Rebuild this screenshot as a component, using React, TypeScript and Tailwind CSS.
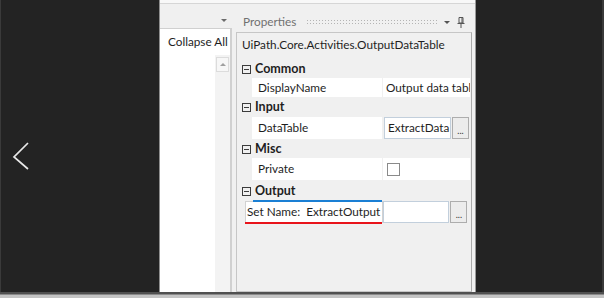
function Minus() {
  return (
    <span className="w-[9px] h-[9px] border border-[#3c3c3c] flex items-center justify-center shrink-0">
      <span className="w-[5px] h-px bg-[#3c3c3c]" />
    </span>
  );
}

function Category({ label, h }: { label: string; h: string }) {
  return (
    <div className={`flex items-center gap-[4px] pl-[5px] pt-px ${h}`}>
      <Minus />
      <span className="font-bold text-[12.5px] text-[#1e1e1e]">{label}</span>
    </div>
  );
}

function DotsButton() {
  return (
    <div className="w-[17px] h-full border border-[#adadad] bg-[#ececec] flex items-end justify-center pb-[3px] text-[9px] leading-none text-[#333]">
      ...
    </div>
  );
}

export default function App() {
  return (
    <div className="w-[604px] h-[298px] flex flex-col bg-[#232323] font-['Lato',sans-serif] text-[11.75px] text-[#1e1e1e]">
      <div className="flex h-[292px]">
        {/* left dark area */}
        <div className="w-[160px] border-l border-l-[#3a3a3a] border-r border-r-[#8e8e8e]">
          <svg width="18" height="32" viewBox="0 0 18 32" className="ml-[11px] mt-[141px]">
            <path d="M16 2 L2 16 L16 28" stroke="#e8e8e8" strokeWidth="1.7" fill="none" />
          </svg>
        </div>

        {/* screenshot */}
        <div className="w-[315px] flex flex-col bg-[#f0f0f0] border-t-[3px] border-t-[#f8f8f8]">
          <div className="h-px bg-[#d6d6d6]" />
          <div className="flex flex-1">
            {/* left panel */}
            <div className="w-[72px] flex flex-col">
              <div className="h-[24px] flex items-end justify-end pr-[5px] pb-[6px]">
                <span className="w-0 h-0 border-l-[3px] border-r-[3px] border-t-[3px] border-l-transparent border-r-transparent border-t-[#6b6b6b]" />
              </div>
              <div className="flex-1 flex flex-col bg-white border-t border-r-2 border-[#d0d0d0]">
                <div className="h-[26px] flex items-center pl-[8px] whitespace-nowrap">Collapse All</div>
                <div className="flex flex-1">
                  <div className="flex-1" />
                  <div className="w-[15px] bg-[#f3f3f3] pt-[2px]">
                    <div className="h-[15px] mx-[1px] border border-[#dcdcdc] bg-[#f7f7f7] flex items-center justify-center">
                      <span className="w-0 h-0 border-l-[3px] border-r-[3px] border-b-[3px] border-l-transparent border-r-transparent border-b-[#a0a0a0]" />
                    </div>
                  </div>
                </div>
              </div>
            </div>
            <div className="w-[4px]" />

            {/* properties panel */}
            <div className="w-[236px] flex flex-col">
              <div className="h-[28px] flex items-center pt-[8px] pl-[7px] pr-[7px]">
                <span className="text-[#707070]">Properties</span>
                <div className="flex-1 h-[6px] ml-[10px] mr-[5px] bg-[radial-gradient(circle,#b4b4b4_0.8px,transparent_1px)] bg-[length:3px_3px]" />
                <span className="w-0 h-0 border-l-[3px] border-r-[3px] border-t-[3px] border-l-transparent border-r-transparent border-t-[#555]" />
                <svg width="8" height="11" viewBox="0 0 8 11" className="ml-[7px]">
                  <path d="M2 0.5 H6 V6 H2 Z" fill="none" stroke="#555" strokeWidth="1" />
                  <path d="M5 1 V6" stroke="#555" strokeWidth="1" />
                  <path d="M0.5 6.5 H7.5" stroke="#555" strokeWidth="1" />
                  <path d="M4 7 V11" stroke="#555" strokeWidth="1" />
                </svg>
              </div>
              <div className="flex-1 border border-[#c6c6c6] border-r-[#a9a9a9] flex flex-col">
                <div className="h-[26px] pb-[3px] flex items-center pl-[5px] whitespace-nowrap">
                  UiPath.Core.Activities.OutputDataTable
                </div>

                <Category label="Common" h="h-[19px]" />
                <div className="flex h-[19px] pl-[15px] pr-px">
                  <div className="w-[130px] bg-white pl-[6px] flex items-center">DisplayName</div>
                  <div className="w-[87px] ml-px bg-white pl-[3px] flex items-center overflow-hidden whitespace-nowrap">
                    Output data table
                  </div>
                </div>

                <Category label="Input" h="h-[20px]" />
                <div className="flex h-[22px] pl-[15px] pr-px">
                  <div className="w-[130px] bg-white pl-[6px] flex items-center">DataTable</div>
                  <div className="w-[87px] ml-px flex gap-px pl-px pr-px">
                    <div className="w-[67px] border border-[#c2cfdc] bg-white pl-[3px] flex items-center overflow-hidden whitespace-nowrap">
                      ExtractData`
                    </div>
                    <DotsButton />
                  </div>
                </div>

                <Category label="Misc" h="h-[19px]" />
                <div className="flex h-[22px] pl-[15px] pr-px">
                  <div className="w-[130px] bg-white pl-[6px] flex items-center">Private</div>
                  <div className="w-[87px] ml-px bg-white pl-[4px] flex items-center">
                    <span className="w-[13px] h-[13px] border border-[#8a8a8a] bg-white mt-[1px]" />
                  </div>
                </div>

                <Category label="Output" h="h-[21px]" />
                <div className="relative flex h-[22px] pl-[8px] pr-px">
                  <div className="w-[139px] border border-[#d2d2d2] bg-white pl-px flex items-center whitespace-nowrap">
                    Set Name:&nbsp;&nbsp;ExtractOutput
                  </div>
                  <div className="w-[87px] flex gap-px pr-px">
                    <div className="w-[66px] border border-[#c2cfdc] bg-white" />
                    <DotsButton />
                  </div>
                  <div className="absolute left-[16px] top-[-1px] w-[129px] h-[2px] bg-[#1a7fd4]" />
                  <div className="absolute left-[8px] top-[21px] w-[137px] h-[2px] bg-[#e8141b]" />
                </div>
              </div>
            </div>
            <div className="w-[3px]" />
          </div>
        </div>

        {/* right dark area */}
        <div className="flex-1 border-l border-l-[#9a9a9a] border-r-2 border-r-[#3a3a3a]" />
      </div>
      <div className="h-[2px] bg-[#505050]" />
      <div className="h-px bg-[#8a8a8a]" />
      <div className="h-[3px] bg-[#c4c4c4]" />
    </div>
  );
}
